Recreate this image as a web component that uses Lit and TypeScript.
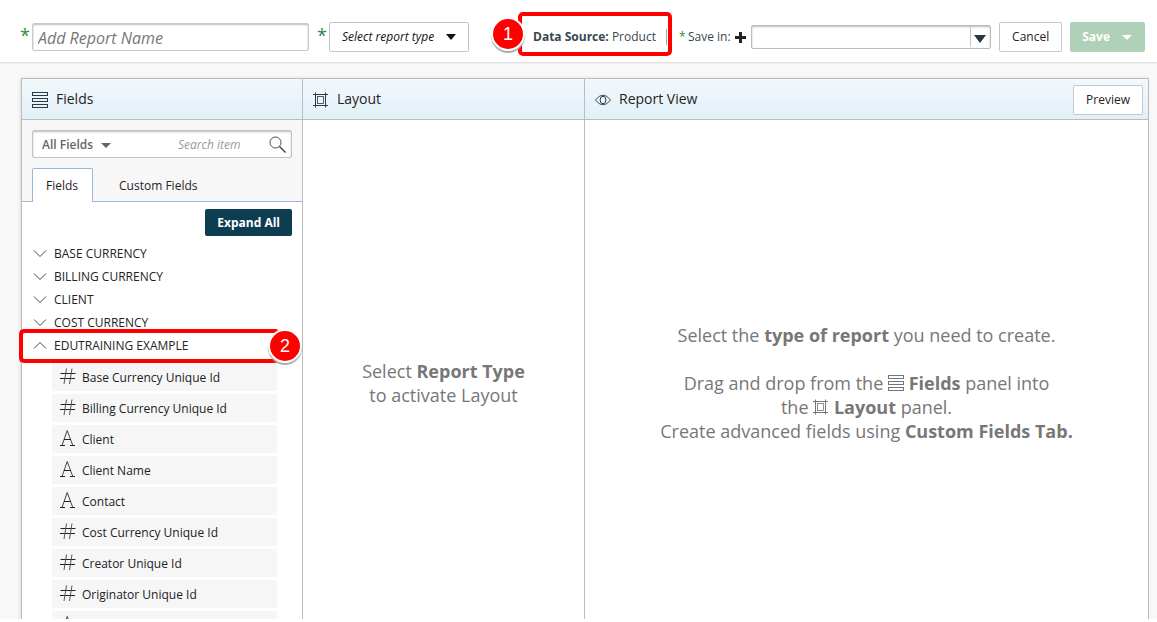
import { LitElement, html, svg, css } from "lit";
import { customElement, state } from "lit/decorators.js";

type FieldKind = "number" | "text";

interface Field {
  kind: FieldKind;
  name: string;
}

interface Group {
  name: string;
  open: boolean;
  fields: Field[];
}

const GROUPS: Group[] = [
  { name: "BASE CURRENCY", open: false, fields: [] },
  { name: "BILLING CURRENCY", open: false, fields: [] },
  { name: "CLIENT", open: false, fields: [] },
  { name: "COST CURRENCY", open: false, fields: [] },
  {
    name: "EDUTRAINING EXAMPLE",
    open: true,
    fields: [
      { kind: "number", name: "Base Currency Unique Id" },
      { kind: "number", name: "Billing Currency Unique Id" },
      { kind: "text", name: "Client" },
      { kind: "text", name: "Client Name" },
      { kind: "text", name: "Contact" },
      { kind: "number", name: "Cost Currency Unique Id" },
      { kind: "number", name: "Creator Unique Id" },
      { kind: "number", name: "Originator Unique Id" },
      { kind: "text", name: "" },
    ],
  },
];

const rowsIcon = html`<svg class="icon" width="16" height="16" viewBox="0 0 16 16" fill="none" stroke="currentColor" aria-hidden="true">
  ${[0, 6, 12].map((y) => svg`<rect x="0.5" y=${y + 0.5} width="15" height="3" />`)}
</svg>`;

const frameIcon = html`<svg class="icon" width="16" height="16" viewBox="0 0 16 16" fill="none" stroke="currentColor" aria-hidden="true">
  <path d="M2.5 0.500v15M12.500 0.500v15M0 2.500h15M0 13.500h15" />
  <rect x="4.500" y="4.500" width="6" height="7" stroke-width="0.800" />
</svg>`;

const eyeIcon = html`<svg class="icon" width="16" height="12" viewBox="0 0 16 12" fill="none" stroke="currentColor" aria-hidden="true">
  <path d="M0.500 6C3 2.800 5.400 1.300 8 1.300S13 2.800 15.500 6C13 9.200 10.600 10.700 8 10.700S3 9.200 0.500 6Z" stroke-width="0.900" />
  <ellipse cx="8" cy="6" rx="2.900" ry="3.700" />
</svg>`;

const searchIcon = html`<svg width="17" height="17" viewBox="0 0 17 17" fill="none" stroke="#2e3b45" aria-hidden="true">
  <circle cx="6.500" cy="6.500" r="5.500" stroke-width="0.900" />
  <path d="M10.500 10.500L16.500 16.500" stroke-width="1.300" />
</svg>`;

const caret = (w: number, h: number) => html`<svg class="caret" width=${w} height=${h} viewBox="0 0 10 6" preserveAspectRatio="none" fill="currentColor" aria-hidden="true"><path d="M0 0h10L5 6z" /></svg>`;

const chevron = (open: boolean) => html`<svg width="14" height="9" viewBox="0 0 14 9" fill="none" stroke="#444" aria-hidden="true">
  <path d=${open ? "M1 7.500L7 1.500L13 7.500" : "M1 1.500L7 7.500L13 1.500"} />
</svg>`;

const kindIcon = (kind: FieldKind) => html`<svg width="16" height="17" viewBox="0 0 16 17" fill="none" stroke="#222" aria-hidden="true">
  ${kind === "number"
    ? svg`<path d="M0.500 5.500h15M0 10.500h15" /><path d="M6.500 0.500L4 16M12 0.500L9.500 16" stroke="#555" />`
    : svg`<path d="M2 15.500L7.200 0.500L12.800 15.500" stroke="#444" /><path d="M4 9.500h7M0 15.500h5M10 15.500h5" />`}
</svg>`;

@customElement("app-root")
export class AppRoot extends LitElement {
  @state() private groups = GROUPS;

  static styles = css`
    :host {
      display: flex;
      flex-direction: column;
      height: 100vh;
      box-sizing: border-box;
      overflow: hidden;
      border-bottom: 3px solid #fff;
      background: #f8f8f8;
      color: #1f2326;
      font: 12px/16px "Open Sans", sans-serif;
    }
    *, *::before, *::after { box-sizing: border-box; }
    button, input, select { font: inherit; color: inherit; margin: 0; border-radius: 2px; }
    svg { display: block; flex: none; }

    .toolbar {
      display: flex;
      align-items: center;
      height: 62px;
      padding: 12px 12px 0 20px;
      background: #fff;
      box-shadow: 0 1px 2px #d8d8d8;
      flex: none;
    }
    .star { color: #2e8b3d; font-size: 18px; line-height: 24px; width: 12px; padding-bottom: 4px; flex: none; }
    .star.small { font-size: 12px; line-height: 16px; width: 9px; padding: 0; }
    .name {
      flex: 0 1 277px;
      min-width: 0;
      height: 28px;
      padding: 2px 5px 0;
      border: 1px solid #c8c8c8;
      box-shadow: inset 0 1px 2px #bbb;
      background: #fff;
      font-size: 16px;
      margin-right: 8px;
    }
    .name::placeholder { color: #777; font-style: italic; opacity: 1; }

    .pick { display: grid; align-items: center; }
    .pick > * { grid-area: 1 / 1; }
    .pick select { appearance: none; background: transparent; width: 100%; border: 0; outline-offset: -1px; }
    .pick .caret { justify-self: end; pointer-events: none; }
    .type { width: 140px; flex: none; }
    .type select { height: 30px; padding: 0 12px; border: 1px solid #c4c4c4; font-style: italic; color: #111; }
    .type .caret { margin-right: 13px; color: #111; }

    .source { position: relative; display: flex; margin-left: 64px; color: #37474f; white-space: nowrap; }
    .bar { width: 1px; height: 16px; background: #aaa; margin: 0 12px 0 10px; }
    .savein { display: flex; align-items: center; color: #37474f; white-space: nowrap; }
    .plus { display: block; padding: 0; border: 0; background: none; color: #222; margin: 0 5px 0 4px; }
    .folder { flex: 1 1 240px; min-width: 0; margin-right: 8px; }
    .folder select { height: 24px; border: 1px solid #bbb; box-shadow: inset 0 1px 2px #bbb; }
    .folder .arrow {
      justify-self: end;
      display: grid;
      place-items: center;
      width: 21px;
      height: 20px;
      padding-top: 4px;
      border-left: 1px solid #c4c4c4;
      color: #263742;
      pointer-events: none;
    }
    .folder .arrow .caret { justify-self: center; margin-right: 2px; }

    .btn { height: 30px; padding: 0 12px; border: 1px solid #c8c8c8; background: #fff; white-space: nowrap; flex: none; }
    .save {
      display: flex;
      align-items: center;
      gap: 12px;
      margin-left: 8px;
      padding: 0 13px 0 12px;
      border: 0;
      background: #afd1b7;
      color: #fff;
      font-weight: 700;
    }

    .panels {
      flex: 1;
      min-height: 0;
      display: grid;
      grid-template-columns: 1fr 1fr 2fr;
      margin: 16px 8px 0 21px;
      border-top: 1px solid #bdbdbd;
      box-shadow: -1px 0 3px #ddd;
    }
    .panel { display: flex; flex-direction: column; min-width: 0; min-height: 0; background: #fff; border-right: 1px solid #bdbdbd; }
    .panel:first-child { border-left: 1px solid #bdbdbd; }
    .head {
      display: flex;
      align-items: center;
      gap: 8px;
      flex: none;
      height: 41px;
      padding: 0 5px 0 10px;
      border-bottom: 1px solid #bdbdbd;
      background: linear-gradient(#f2f9fc, #e2f0f8);
    }
    .head .icon { color: #2b3c48; margin-top: 2px; }
    .head .btn { margin-top: 2px; }
    .head h2 { flex: 1; margin: 0; font-size: 14px; line-height: 20px; font-weight: 500; }

    .filters { flex: none; background: #f7f7f7; padding: 10px 10px 0; }
    .search {
      display: flex;
      align-items: center;
      height: 28px;
      padding: 2px 5px 0 0;
      border: 1px solid #c4c4c4;
      box-shadow: inset 0 1px 2px #bbb;
      border-radius: 2px;
      background: #fff;
    }
    .scope { width: 78px; flex: none; color: #666; font-weight: 600; }
    .scope select { padding: 0 0 0 9px; }
    .term { flex: 1; min-width: 0; border: 0; background: none; padding: 0 0 0 67px; }
    .term::placeholder { color: #999; font-style: italic; opacity: 1; }
    .go { padding: 0 0 2px; border: 0; background: none; }
    .tabs { display: flex; margin: 10px -10px 0; padding: 0 10px; box-shadow: inset 0 -1px #9db7d6; }
    .tab { height: 34px; padding: 0 25px; border: 1px solid transparent; border-bottom: 0; background: none; border-radius: 2px 2px 0 0; }
    .tab.on { padding: 0 14px 0 13px; border-color: #9db7d6; background: #fff; }

    .tree { flex: 1; min-height: 0; padding: 7px 10px 0; }
    .expand { display: block; margin: 0 0 6px auto; height: 27px; padding: 0 12px; border: 0; background: #0d3d50; color: #fff; font-weight: 700; }
    .group { position: relative; }
    .toggle { display: flex; align-items: center; gap: 7px; width: 100%; height: 23px; padding: 0 1px; border: 0; background: none; text-align: left; font-weight: 500; }
    .fields { list-style: none; margin: 0; padding: 6px 15px 0 20px; display: grid; gap: 3px; }
    .field { display: flex; align-items: center; gap: 6px; height: 28px; padding: 2px 8px 0; background: #f6f6f6; color: #222; }
    .field svg { margin-bottom: 4px; }

    .empty {
      flex: 1;
      display: grid;
      place-content: center;
      padding-top: 26px;
      color: #777;
      font-size: 18px;
      line-height: 24px;
      text-align: center;
    }
    .empty p { margin: 0; }
    .empty p + p { margin-top: 24px; }
    .empty .icon { display: inline-block; vertical-align: -1px; }

    .callout { position: absolute; border: 4px solid #fe0000; border-radius: 5px; pointer-events: none; }
    .callout.one { inset: -17px 7px -11px -15px; }
    .callout.two { inset: -5px 12px auto -13px; height: 34px; z-index: 1; border-right: 0; }
    .badge {
      position: absolute;
      top: 50%;
      width: 34px;
      height: 34px;
      margin-top: -17px;
      border: 2px solid #fff;
      border-radius: 50%;
      background: #fe0000;
      box-shadow: 0 2px 1px #aaa;
      color: #fff;
      font: 18px/30px "Liberation Sans", sans-serif;
      text-align: center;
    }
    .one .badge { left: -31px; }
    .two .badge { right: -22px; }
  `;

  private toggle(index: number) {
    this.groups = this.groups.map((g, i) => (i === index ? { ...g, open: !g.open } : g));
  }

  private expandAll() {
    this.groups = this.groups.map((g) => ({ ...g, open: true }));
  }

  private renderGroup(group: Group, index: number) {
    return html`<div class="group">
      <button class="toggle" aria-expanded=${group.open} @click=${() => this.toggle(index)}>
        ${chevron(group.open)}<span>${group.name}</span>
      </button>
      ${index === 4 ? html`<div class="callout two"><span class="badge">2</span></div>` : null}
      ${group.open && group.fields.length
        ? html`<ul class="fields">
            ${group.fields.map((f) => html`<li class="field">${kindIcon(f.kind)}<span>${f.name}</span></li>`)}
          </ul>`
        : null}
    </div>`;
  }

  render() {
    return html`
      <header class="toolbar">
        <span class="star">*</span>
        <input class="name" type="text" aria-label="Report name" placeholder="Add Report Name" />
        <span class="star">*</span>
        <div class="pick type">
          <select aria-label="Report type"><option>Select report type</option></select>
          ${caret(10, 6)}
        </div>
        <div class="source">
          <span><b>Data Source:</b> Product</span>
          <span class="bar"></span>
          <div class="callout one"><span class="badge">1</span></div>
        </div>
        <div class="savein">
          <span class="star small">*</span><label for="folder">Save in:</label>
          <button class="plus" aria-label="Add folder">
            <svg width="11" height="11" viewBox="0 0 11 11" fill="none" stroke="currentColor" stroke-width="3" aria-hidden="true"><path d="M5.500 0v11M0 5.500h11" /></svg>
          </button>
        </div>
        <div class="pick folder">
          <select id="folder"><option></option></select>
          <span class="arrow">${caret(12, 8)}</span>
        </div>
        <button class="btn">Cancel</button>
        <button class="btn save">Save ${caret(10, 5)}</button>
      </header>

      <main class="panels">
        <section class="panel">
          <div class="head">${rowsIcon}<h2>Fields</h2></div>
          <div class="filters">
            <div class="search">
              <div class="pick scope">
                <select aria-label="Field scope"><option>All Fields</option></select>
                ${caret(10, 5)}
              </div>
              <input class="term" type="text" aria-label="Search item" placeholder="Search item" />
              <button class="go" aria-label="Search">${searchIcon}</button>
            </div>
            <div class="tabs" role="tablist">
              <button class="tab on" role="tab" aria-selected="true">Fields</button>
              <button class="tab" role="tab" aria-selected="false">Custom Fields</button>
            </div>
          </div>
          <div class="tree">
            <button class="expand" @click=${this.expandAll}>Expand All</button>
            ${this.groups.map((g, i) => this.renderGroup(g, i))}
          </div>
        </section>

        <section class="panel">
          <div class="head">${frameIcon}<h2>Layout</h2></div>
          <div class="empty"><p>Select <b>Report Type</b><br />to activate Layout</p></div>
        </section>

        <section class="panel">
          <div class="head">${eyeIcon}<h2>Report View</h2><button class="btn">Preview</button></div>
          <div class="empty">
            <p>Select the <b>type of report</b> you need to create.</p>
            <p>
              Drag and drop from the ${rowsIcon} <b>Fields</b> panel into<br />
              the ${frameIcon} <b>Layout</b> panel.<br />
              Create advanced fields using <b>Custom Fields Tab.</b>
            </p>
          </div>
        </section>
      </main>
    `;
  }
}
